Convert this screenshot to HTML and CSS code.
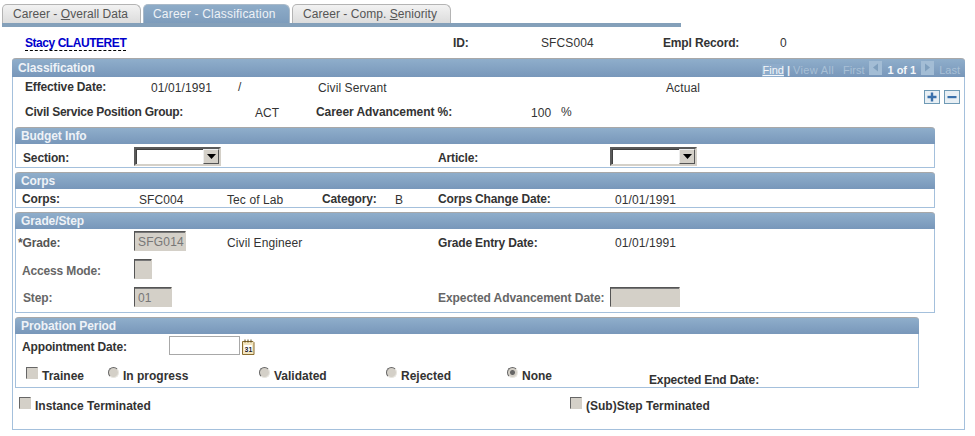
FILE: index.html
```html
<!DOCTYPE html>
<html lang="en">
<head>
<meta charset="utf-8">
<title>Career - Classification</title>
<link rel="stylesheet" href="styles.css">
</head>
<body>
<nav class="tabs">
  <a class="tab t1">Career - <u>O</u>verall Data</a>
  <a class="tab t2 active">Career - Classification</a>
  <a class="tab t3">Career - Comp. <u>S</u>eniority</a>
</nav>
<div class="tabbar"></div>

<header class="person">
  <a class="name">Stacy CLAUTERET</a>
  <span class="lbl">ID:</span>
  <span class="val">SFCS004</span>
  <span class="lbl">Empl Record:</span>
  <span class="val">0</span>
</header>

<section class="panel">
  <div class="panel-head">
    <span>Classification</span>
    <div class="pager">
      <a class="find">Find</a><span class="sep">|</span><span class="dim viewall">View All</span>
      <span class="dim first">First</span>
      <span class="nav"><svg width="13" height="14" viewBox="0 0 13 14"><path d="M9 2.500v8L4 6.500z" fill="#7f9fbd"/></svg></span>
      <b class="count">1 of 1</b>
      <span class="nav"><svg width="13" height="14" viewBox="0 0 13 14"><path d="M4 2.500v8l5-4z" fill="#7f9fbd"/></svg></span>
      <span class="dim">Last</span>
    </div>
  </div>

  <div class="top">
    <div class="top-fields">
      <div class="row r-eff">
        <span class="lbl">Effective Date:</span>
        <span class="val">01/01/1991</span>
        <span class="plain">/</span>
        <span class="val">Civil Servant</span>
        <span class="val">Actual</span>
      </div>
      <div class="row r-grp">
        <span class="lbl tight">Civil Service Position Group:</span>
        <span class="val">ACT</span>
        <span class="lbl loose">Career Advancement %:</span>
        <span class="val">100</span>
        <span class="plain">%</span>
      </div>
    </div>
    <div class="actions">
      <span class="btn"><svg width="14" height="12" viewBox="0 0 14 12"><path d="M5.800 1.500h2.400v3.300h3.300v2.400H8.200v3.300H5.800V7.200H2.500V4.800h3.300z" fill="#3a70ab"/></svg></span>
      <span class="btn"><svg width="14" height="12" viewBox="0 0 14 12"><path d="M2.500 5h9v2.200h-9z" fill="#3a70ab"/></svg></span>
    </div>
  </div>

  <section class="box budget">
    <h3 class="box-head">Budget Info</h3>
    <div class="row r-budget">
      <span class="lbl">Section:</span>
      <div class="select"><span class="arrow"><svg width="9" height="5" viewBox="0 0 9 5"><path d="M0 0h9L4.500 5z" fill="#000"/></svg></span></div>
      <span class="lbl">Article:</span>
      <div class="select"><span class="arrow"><svg width="9" height="5" viewBox="0 0 9 5"><path d="M0 0h9L4.500 5z" fill="#000"/></svg></span></div>
    </div>
  </section>

  <section class="box corps">
    <h3 class="box-head">Corps</h3>
    <div class="row r-corps">
      <span class="lbl">Corps:</span>
      <span class="val">SFC004</span>
      <span class="val">Tec of Lab</span>
      <span class="lbl">Category:</span>
      <span class="val">B</span>
      <span class="lbl">Corps Change Date:</span>
      <span class="val">01/01/1991</span>
    </div>
  </section>

  <section class="box grade">
    <h3 class="box-head">Grade/Step</h3>
    <div class="row r-grade">
      <span class="lbl req">*Grade:</span>
      <div class="ro w52">SFG014</div>
      <span class="val">Civil Engineer</span>
      <span class="lbl">Grade Entry Date:</span>
      <span class="val">01/01/1991</span>
    </div>
    <div class="row r-access">
      <span class="lbl off">Access Mode:</span>
      <div class="ro w18"></div>
    </div>
    <div class="row r-step">
      <span class="lbl off">Step:</span>
      <div class="ro w38">01</div>
      <span class="lbl off loose">Expected Advancement Date:</span>
      <div class="ro w70"></div>
    </div>
  </section>

  <section class="box prob">
    <h3 class="box-head">Probation Period</h3>
    <div class="row r-appt">
      <span class="lbl">Appointment Date:</span>
      <div class="date"></div>
      <svg class="cal" width="13" height="16" viewBox="0 0 13 16"><path d="M.5 2.500h10.500l1 1v12H.5z" fill="#f3e6c0" stroke="#8a6d2f"/><path d="M3 .5v3M6 .5v3M9 .5v3" stroke="#5a4a20"/><rect x="2" y="6" width="8" height="7" fill="#fff"/><text x="2.500" y="12.500" class="cal-txt">31</text></svg>
    </div>
    <div class="row r-opts">
      <label class="opt"><input class="chk" type="checkbox" disabled>Trainee</label>
      <label class="opt"><input class="rad" type="radio" name="p" disabled>In progress</label>
      <label class="opt"><input class="rad" type="radio" name="p" disabled>Validated</label>
      <label class="opt"><input class="rad" type="radio" name="p" disabled>Rejected</label>
      <label class="opt"><input class="rad" type="radio" name="p" disabled checked>None</label>
      <span class="lbl end">Expected End Date:</span>
    </div>
  </section>

  <div class="row r-term">
    <label class="opt"><input class="chk" type="checkbox" disabled>Instance Terminated</label>
    <label class="opt"><input class="chk" type="checkbox" disabled>(Sub)Step Terminated</label>
  </div>
</section>
</body>
</html>
```
FILE: styles.css
```css
* { box-sizing: border-box; }
html, body { margin: 0; padding: 0; background: #fff; }
body {
  width: 975px; height: 436px; overflow: hidden;
  padding: 4px 0 0 2px;
  font: 12px/14px "Liberation Sans", Arial, sans-serif;
  color: #333;
}
.tabs { display: flex; height: 19px; gap: 2px; }
.tab {
  height: 19px; padding: 2px 0 0 10px;
  border: 1px solid #b4b4b4; border-bottom: 0;
  border-radius: 5px 6px 0 0;
  background: linear-gradient(#f2f2f2, #dcdcdc);
  color: #555;
  letter-spacing: .05px;
}
.t1 { width: 139px; }
.t2 { width: 147px; }
.t3 { width: 159px; }
.tab.active {
  background: linear-gradient(#8eacc8, #7d9cbc);
  border-color: #a9b9c8;
  color: #eef2f7;
  padding-left: 9px;
  letter-spacing: .2px;
}
.tabbar { width: 679px; height: 4px; background: #84a0ba; }

.person {
  display: grid;
  grid-template-columns: 428px 88px 122px 117px auto;
  height: 31px; padding: 9px 0 0 23px;
}
.name {
  justify-self: start; height: 15px; font-weight: 700; color: #00c;
  border-bottom: 1px dashed #000;
  letter-spacing: -.45px;
}
.lbl { font-weight: 700; letter-spacing: -.15px; }
.lbl.tight { letter-spacing: -.25px; }
.lbl.loose { letter-spacing: -.07px; }
.lbl.off { color: #666; }
.lbl.req { color: #555; }
.val { letter-spacing: .1px; }

.panel {
  margin-left: 10px; width: 953px; height: 372px;
  border: 1px solid #a4c0dc; border-top: 0; border-radius: 4px 4px 0 0;
}
.panel-head {
  display: flex; justify-content: space-between;
  height: 19px; margin: 0 -1px; padding: 2px 5px 0 6px;
  border-top: 1px solid #a8a8a8; border-radius: 4px 4px 0 0;
  background: linear-gradient(#8faecb, #7897ba);
  color: #eef2f7;
}
.pager {
  display: flex; align-items: flex-start; line-height: 13px;
  padding-top: 3px; color: #eef2f7; font-size: 11px;
}
.find { text-decoration: underline; background: #8eaccb; color: #f4f7fa; }
.sep { margin: 0 3px; font-weight: 700; }
.dim { color: #a9c0d6; }
.viewall { letter-spacing: .35px; }
.first { margin-left: 9px; }
.nav { margin: -3px 5px 0; height: 14px; background: #a3bdd5; }
.nav svg { display: block; }
.count { color: #f4f7fa; }

.top { display: flex; height: 50px; }
.top-fields { flex: 1; padding-left: 12px; }
.row { display: grid; align-items: start; }
.r-eff { grid-template-columns: 126px 87px 80px 348px auto; height: 25px; padding-top: 3px; }
.r-grp { grid-template-columns: 230px 61px 215px 30px auto; padding-top: 3px; }
.plain { font-weight: 400; }
.r-eff .val, .r-grp .val, .r-corps .val, .r-grade .val { margin-top: 1px; }
.actions { display: flex; gap: 4px; padding: 13px 4px 0 0; }
.btn { width: 16px; height: 14px; background: #e8eff4; border: 1px solid #6f9ab5; display: block; }
.btn svg { display: block; }

.box {
  width: 920px; margin: 0 0 4px 2px;
  border: 1px solid #a4c0dc; border-top: 0; border-radius: 4px 4px 0 0;
}
.box-head {
  margin: 0 -1px; height: 17px; padding: 1px 0 0 6px;
  border-top: 1px solid #a8a8a8; border-radius: 4px 4px 0 0;
  background: linear-gradient(#8faecb, #7897ba);
  font: inherit; color: #eef2f7; font-weight: 700; letter-spacing: -.1px;
}
.panel-head > span:first-child { font-weight: 700; letter-spacing: -.1px; }
.budget { height: 41px; }
.corps { height: 36px; }
.grade { height: 101px; }
.prob { height: 71px; width: 904px; }

.r-budget { grid-template-columns: 111px 304px 172px auto; padding: 3px 0 0 7px; }
.r-budget .lbl { margin-top: 4px; }
.select {
  width: 87px; height: 19px; background: #fff;
  border: 2px solid; border-color: #5a5a5a #d4d0c8 #d4d0c8 #5a5a5a;
  box-shadow: inset 1px 1px 0 #404040;
  display: flex; justify-content: flex-end;
}
.arrow {
  width: 16px; height: 15px; background: #d4d0c8;
  border: 1px solid; border-color: #eee #555 #555 #eee;
  display: flex; align-items: center; justify-content: center;
}
.arrow svg { display: block; }

.r-corps { grid-template-columns: 117px 88px 95px 73px 43px 177px auto; padding: 3px 0 0 6px; }

.ro {
  height: 20px; background: #d4d0c8; color: #777; padding: 3px 0 0 3px;
  border: 1px solid; border-color: #555 #d4d0c8 #d4d0c8 #555;
  box-shadow: inset 0 1px 0 #777;
  letter-spacing: .2px;
}
.w52 { width: 52px; } .w18 { width: 18px; } .w38 { width: 38px; } .w70 { width: 70px; }
.r-grade { grid-template-columns: 116px 93px 211px 177px auto; padding: 2px 0 0 2px; }
.r-grade .lbl { margin-top: 5px; }
.r-grade .val { margin-top: 5px; }
.r-access { grid-template-columns: 112px auto; padding: 8px 0 0 6px; }
.r-access .lbl { margin-top: 5px; }
.r-step .lbl { margin-top: 4px; }
.r-step { grid-template-columns: 111px 304px 172px auto; padding: 8px 0 0 7px; }

.r-appt { grid-template-columns: 147px 73px auto; padding: 2px 0 0 6px; }
.r-appt .lbl { margin-top: 4px; }
.date { width: 71px; height: 19px; border: 1px solid #a8a8a8; background: #fff; }
.cal { margin-top: 3px; display: block; }
.cal-txt { font: 700 7px "Liberation Sans", Arial, sans-serif; fill: #222; }

.opt { display: flex; align-items: flex-start; font-weight: 700; color: #333; white-space: nowrap; line-height: 14px; }
.chk, .rad {
  appearance: none; -webkit-appearance: none; margin: -2px 4px 0 0; flex: none;
  background: #d4d0c8;
}
.chk {
  width: 12px; height: 12px;
  border: 1px solid; border-color: #666 #d4d0c8 #d4d0c8 #666;
}
.rad {
  width: 11px; height: 11px; border-radius: 50%;
  border: 1px solid; border-color: #666 #e8e6e0 #e8e6e0 #666;
}
.rad:checked { background: radial-gradient(circle, #666 0 2px, #d4d0c8 3px); }
.r-opts { grid-template-columns: 82px 151px 127px 121px 142px auto; padding: 14px 0 0 10px; height: 31px; }
.end { margin-top: 4px; }
.r-term { grid-template-columns: 551px auto; padding: 7px 0 0 6px; }
```
